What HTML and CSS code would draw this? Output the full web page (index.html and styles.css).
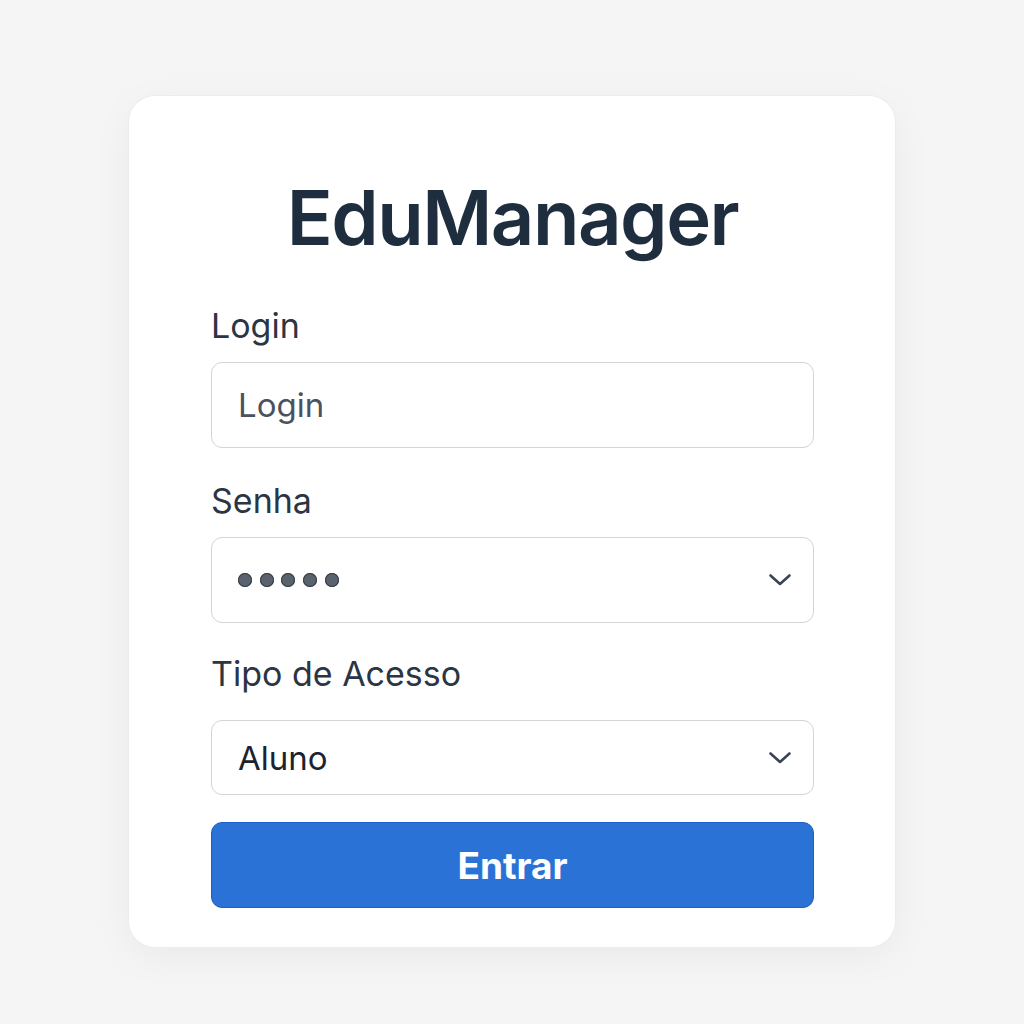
FILE: index.html
```html
<!DOCTYPE html>
<html lang="pt-BR">
<head>
<meta charset="utf-8">
<title>EduManager</title>
<link rel="stylesheet" href="styles.css">
</head>
<body>
<main class="page">
  <form class="card">
    <h1 class="title">EduManager</h1>
    <label class="label label-login">Login</label>
    <div class="field field-tall">
      <span class="placeholder">Login</span>
    </div>
    <label class="label label-senha">Senha</label>
    <div class="field field-tall">
      <span class="dots"><i></i><i></i><i></i><i></i><i></i></span>
      <svg class="chev" width="24" height="14" viewBox="0 0 24 14"><path d="M2.5 2.5 L12 11 L21.5 2.5" fill="none" stroke="#3a4452" stroke-width="2.6" stroke-linecap="round" stroke-linejoin="round"/></svg>
    </div>
    <label class="label label-tipo">Tipo de Acesso</label>
    <div class="field field-select">
      <span class="value">Aluno</span>
      <svg class="chev" width="24" height="14" viewBox="0 0 24 14"><path d="M2.5 2.5 L12 11 L21.5 2.5" fill="none" stroke="#3a4452" stroke-width="2.6" stroke-linecap="round" stroke-linejoin="round"/></svg>
    </div>
    <button type="button" class="btn">Entrar</button>
  </form>
</main>
</body>
</html>
```
FILE: styles.css
```css
html, body {
  margin: 0;
  padding: 0;
  background: #f5f5f5;
  font-family: Inter, "Noto Sans", sans-serif;
}
.page {
  width: 1024px;
  height: 1024px;
  display: flex;
  justify-content: center;
  align-items: flex-start;
}
.card {
  margin-top: 96px;
  width: 766px;
  height: 851px;
  box-sizing: border-box;
  background: #ffffff;
  border-radius: 26px;
  box-shadow: 0 0 0 1px #ececec, 0 10px 40px rgba(0,0,0,0.05);
  padding: 0 81px 0 82px;
  display: flex;
  flex-direction: column;
}
.title {
  margin: 75px 0 0 0;
  text-align: center;
  font-size: 76px;
  line-height: 92px;
  font-weight: 600;
  color: #1e2e3e;
  letter-spacing: -1.5px;
}
.label {
  display: block;
  font-size: 34px;
  line-height: 40px;
  color: #2b3544;
  font-weight: 400;
}
.label-login { margin-top: 43px; }
.label-senha { margin-top: 33px; }
.label-tipo { margin-top: 31px; }
.field {
  margin-top: 16px;
  box-sizing: border-box;
  border: 1.5px solid #d3d4d6;
  border-radius: 11px;
  background: #fff;
  display: flex;
  align-items: center;
  padding: 0 21px 0 26px;
}
.field-tall { height: 86px; }
.field-select { height: 75px; margin-top: 26px; }
.placeholder {
  font-size: 33px;
  color: #4a5260;
  flex: 1;
}
.value {
  font-size: 33px;
  color: #1b2330;
  flex: 1;
}
.dots {
  flex: 1;
  display: flex;
  gap: 7.7px;
}
.dots i {
  display: block;
  width: 14px;
  height: 14px;
  border-radius: 50%;
  background: #5a626e;
  box-shadow: inset 0 0 0 1px #333b47;
}
.chev { display: block; }
.btn {
  margin-top: 27px;
  height: 86px;
  border: 1.5px solid #1a5fcb;
  border-radius: 11px;
  background: #2a72d6;
  color: #ffffff;
  font-family: Inter, "Noto Sans", sans-serif;
  font-size: 37px;
  font-weight: 700;
  cursor: pointer;
}
```
